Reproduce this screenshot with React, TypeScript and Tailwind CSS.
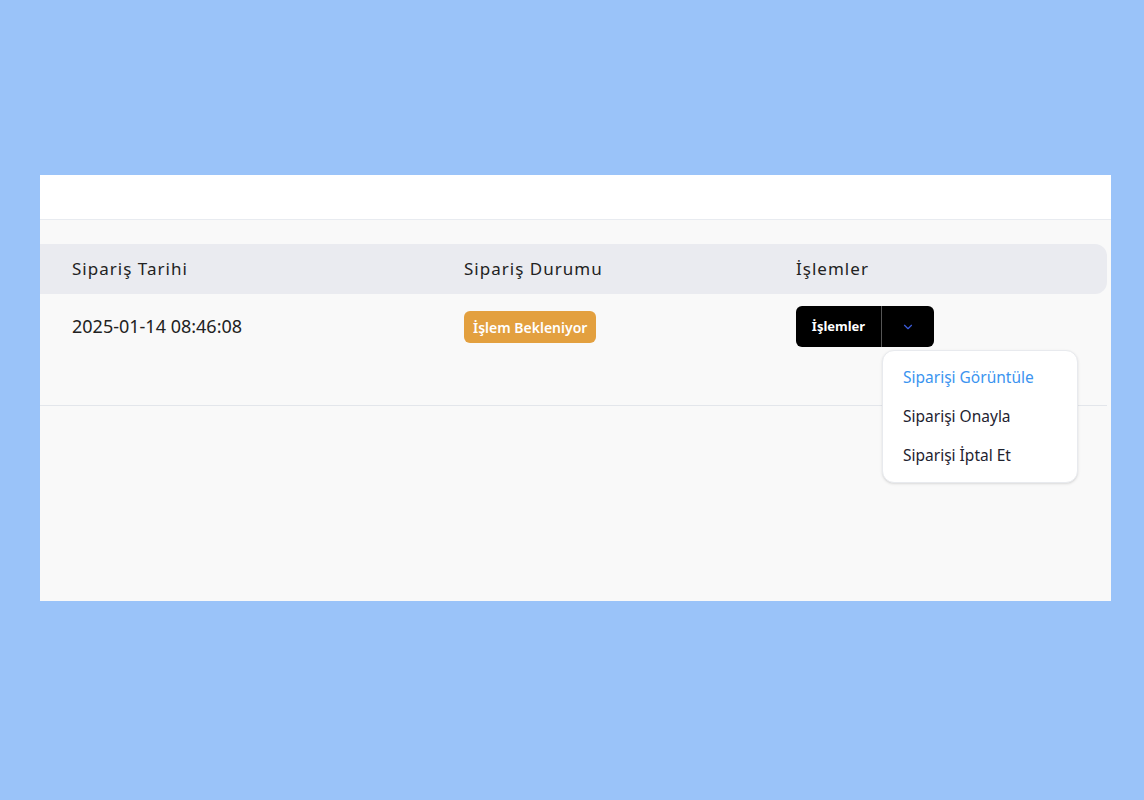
import { ChevronDown } from "lucide-react"

const font = { fontFamily: '"Noto Sans", "Open Sans", sans-serif' }

export default function App() {
    return (
        <div className="min-h-[800px] w-full bg-[#9ac3f9] pt-[175px] px-[40px]" style={font}>
            <div className="h-[426px] w-[1071px] bg-[#f9f9f9]">
                <div className="h-[45px] bg-white border-b border-[#e8ebf0]" />
                <div className="pt-[24px] pr-[4px]">
                    <div className="flex h-[50px] items-center rounded-r-xl bg-[#eaebf0] pl-[32px] text-[17px] tracking-[0.06em] text-[#222]">
                        <div className="w-[392px]">Sipariş Tarihi</div>
                        <div className="w-[332px]">Sipariş Durumu</div>
                        <div>İşlemler</div>
                    </div>
                    <div className="flex h-[112px] items-start border-b border-[#e3e6eb] pl-[32px] pt-[12px]">
                        <div className="w-[392px] pt-[7px] text-[18px] text-[#222]">2025-01-14 08:46:08</div>
                        <div className="w-[332px] pt-[5px]">
                            <span className="inline-flex h-[32px] items-center rounded-md bg-[#e3a03f] px-[9px] text-[14px] font-semibold text-white">
                                İşlem Bekleniyor
                            </span>
                        </div>
                        <div className="relative flex">
                            <button className="flex h-[41px] w-[85px] items-center justify-center rounded-l-md bg-black text-[13px] font-bold text-white">
                                İşlemler
                            </button>
                            <button className="flex h-[41px] w-[53px] items-center justify-center rounded-r-md border-l border-[#555] bg-black">
                                <ChevronDown className="h-[14px] w-[14px] text-[#3b5bdb]" strokeWidth={2} />
                            </button>
                            <div className="absolute left-[86px] top-[44px] flex w-[196px] flex-col rounded-xl border border-[#e8eaee] bg-white py-[7px] shadow-sm">
                                <div className="flex h-[39px] items-center px-[20px] text-[15.5px] text-[#3b94f0]">Siparişi Görüntüle</div>
                                <div className="flex h-[39px] items-center px-[20px] text-[15.5px] text-[#1f2330]">Siparişi Onayla</div>
                                <div className="flex h-[39px] items-center px-[20px] text-[15.5px] text-[#1f2330]">Siparişi İptal Et</div>
                            </div>
                        </div>
                    </div>
                </div>
            </div>
        </div>
    )
}
